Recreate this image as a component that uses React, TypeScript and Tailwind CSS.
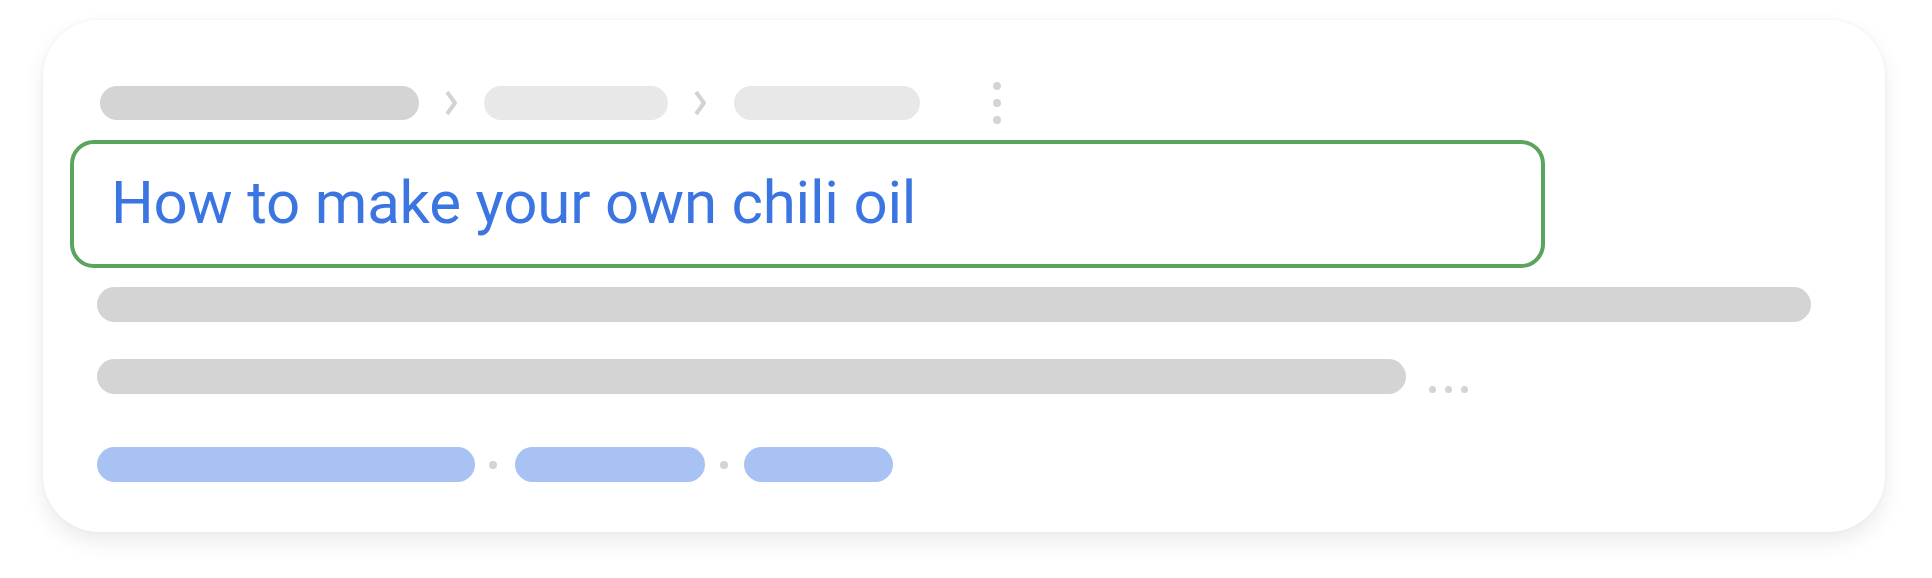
const pill = 'h-[35px] rounded-full';

function Chevron() {
  return (
    <svg width="14" height="26" viewBox="0 0 14 26" className="shrink-0">
      <polyline points="3,2 11,13 3,24" fill="none" stroke="#d2d3d2" strokeWidth="4" strokeLinejoin="round" />
    </svg>
  );
}

function Dot({ size = 8 }: { size?: number }) {
  return <span className="block rounded-full bg-[#d4d4d4]" style={{ width: size, height: size }} />;
}

export default function App() {
  return (
    <div className="min-h-screen bg-white pt-[20px] pl-[43px]">
      <div className="w-[1842px] h-[512px] rounded-[56px] bg-white pl-[27px] pt-[66px] shadow-[0_0_4px_rgba(0,0,0,0.05),0_10px_22px_rgba(0,0,0,0.08)]">
        {/* breadcrumb */}
        <div className="flex items-center h-[34px] ml-[30px]">
          <div className="w-[319px] h-[34px] rounded-full bg-[#d3d4d3]" />
          <div className="ml-[25px]">
            <Chevron />
          </div>
          <div className="ml-[26px] w-[184px] h-[34px] rounded-full bg-[#e8e8e8]" />
          <div className="ml-[25px]">
            <Chevron />
          </div>
          <div className="ml-[27px] w-[186px] h-[34px] rounded-full bg-[#e8e8e8]" />
          <div className="ml-[73px] flex flex-col gap-[9px]">
            <Dot />
            <Dot />
            <Dot />
          </div>
        </div>

        {/* title */}
        <div className="mt-[20px] w-[1475px] h-[128px] rounded-[24px] border-4 border-[#5aa45e] flex items-center pl-[37px] pb-[2px]">
          <h1 className="font-['Roboto',sans-serif] text-[60px] leading-none text-[#3b75e1] tracking-[-0.2px]">
            How to make your own chili oil
          </h1>
        </div>

        {/* snippet lines */}
        <div className={`mt-[19px] ml-[27px] w-[1714px] ${pill} bg-[#d3d4d3]`} />
        <div className="mt-[37px] ml-[27px] flex items-end">
          <div className={`w-[1309px] ${pill} bg-[#d3d4d3]`} />
          <div className="ml-[23px] mb-[1px] flex gap-[9px]">
            <Dot size={7} />
            <Dot size={7} />
            <Dot size={7} />
          </div>
        </div>

        {/* links */}
        <div className="mt-[53px] ml-[27px] flex items-center">
          <div className={`w-[378px] ${pill} bg-[#a8c2f3]`} />
          <div className="ml-[14px] mr-[18px]">
            <Dot />
          </div>
          <div className={`w-[190px] ${pill} bg-[#a8c2f3]`} />
          <div className="ml-[15px] mr-[16px]">
            <Dot />
          </div>
          <div className={`w-[149px] ${pill} bg-[#a8c2f3]`} />
        </div>
      </div>
    </div>
  );
}
